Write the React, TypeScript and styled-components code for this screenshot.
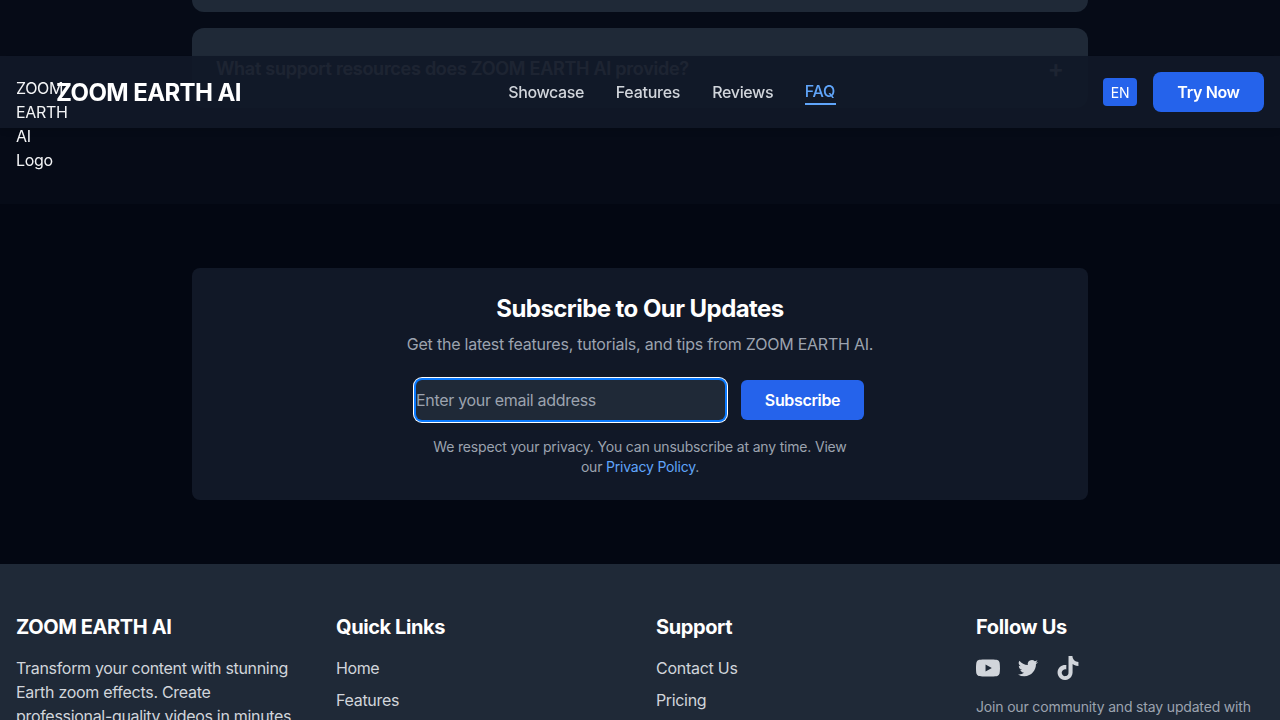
import React from "react";
import styled, { createGlobalStyle } from "styled-components";

const Global = createGlobalStyle`
  *, *::before, *::after { box-sizing: border-box; }
  body {
    margin: 0;
    height: 720px;
    overflow: hidden;
    background: #030712;
    color: #f3f4f6;
    font: 400 16px/24px Inter, "Liberation Sans", sans-serif;
  }
  h2, h3, p, ul { margin: 0; padding: 0; }
  ul { list-style: none; }
  a { color: inherit; text-decoration: none; }
  button, input { font: inherit; border: 0; padding: 0; }
`;

const T = styled.span<{ $ls?: number }>`
  letter-spacing: ${(p) => p.$ls ?? 0}px;
  white-space: nowrap;
`;

const Header = styled.header`
  position: fixed;
  top: 56px;
  left: 0;
  right: 0;
  z-index: 10;
  height: 72px;
  padding: 0 16px;
  display: flex;
  align-items: center;
  justify-content: space-between;
  background: rgba(17, 24, 39, 0.95);
  box-shadow: 0 4px 6px -1px rgba(0, 0, 0, 0.1);
`;
const Brand = styled.a`
  display: flex;
  align-items: center;
  gap: 8px;
`;
const LogoAlt = styled.span`
  width: 32px;
  height: 32px;
  letter-spacing: -0.35px;
`;
const BrandName = styled.span`
  width: 185px;
  padding-top: 2px;
  font-size: 24px;
  font-weight: 700;
  line-height: 32px;
  color: #fff;
  white-space: nowrap;
`;
const Nav = styled.nav`
  display: flex;
  align-items: center;
  gap: 32px;
`;
const NavLink = styled.a<{ $active?: boolean; $w: number }>`
  width: ${(p) => p.$w}px;
  white-space: nowrap;
  font-weight: 500;
  color: ${(p) => (p.$active ? "#60a5fa" : "#d1d5db")};
  border-bottom: ${(p) => (p.$active ? "2px solid #60a5fa" : "0")};
`;
const Actions = styled.div`
  display: flex;
  align-items: center;
  gap: 16px;
`;
const Lang = styled.button`
  width: 34px;
  height: 28px;
  padding-top: 2px;
  border-radius: 4px;
  background: #2563eb;
  color: #fff;
  font-size: 14px;
  line-height: 20px;
`;
const Primary = styled.button<{ $w: number; $r: number }>`
  flex: none;
  width: ${(p) => p.$w}px;
  height: 40px;
  border-radius: ${(p) => p.$r}px;
  background: #2563eb;
  color: #fff;
  font-weight: 600;
`;

const FaqSection = styled.section`
  height: 204px;
  overflow: hidden;
  display: flex;
  flex-direction: column;
  justify-content: flex-end;
  align-items: center;
  gap: 16px;
  padding-bottom: 96px;
  background: #060b17;
`;
const FaqItem = styled.div`
  flex: none;
  width: 896px;
  height: 80px;
  padding: 2px 24px 0;
  border-radius: 12px;
  display: flex;
  align-items: center;
  justify-content: space-between;
  background: #1f2937;
  color: #fff;
  font-size: 18px;
  font-weight: 600;
`;
const Plus = styled.span`
  font-size: 24px;
  line-height: 32px;
`;

const SubscribeSection = styled.section`
  height: 360px;
  padding: 64px 0;
  background: #030712;
`;
const Card = styled.div`
  width: 896px;
  height: 232px;
  margin: 0 auto;
  padding: 25px 24px 24px;
  border-radius: 8px;
  background: #111827;
  text-align: center;
  display: flex;
  flex-direction: column;
  align-items: center;
`;
const CardTitle = styled.h2`
  font-size: 24px;
  line-height: 32px;
  font-weight: 700;
  color: #fff;
  margin-bottom: 7px;
`;
const CardText = styled.p`
  color: #9ca3af;
  margin-bottom: 24px;
`;
const Form = styled.form`
  width: 448px;
  display: flex;
  gap: 16px;
  margin-bottom: 17px;
`;
const Email = styled.input<{ $ls: number }>`
  flex: 1;
  min-width: 0;
  height: 40px;
  border-radius: 6px;
  background: #1f2937;
  color: #fff;
  outline: none;
  letter-spacing: ${(p) => p.$ls}px;
  box-shadow: 0 0 0 2px #0a7aff, 0 0 0 3px #fff;
  &::placeholder { color: #9ca3af; opacity: 1; }
`;
const Note = styled.p`
  font-size: 14px;
  line-height: 20px;
  color: #9ca3af;
`;
const Policy = styled.a`
  color: #60a5fa;
`;

const Footer = styled.footer`
  height: 156px;
  overflow: hidden;
  padding: 49px 16px 0;
  display: grid;
  grid-template-columns: repeat(4, 1fr);
  gap: 32px;
  background: #1f2937;
  color: #d1d5db;
`;
const FooterTitle = styled.h3`
  font-size: 20px;
  line-height: 28px;
  font-weight: 700;
  color: #fff;
  margin-bottom: 15px;
`;
const Links = styled.ul`
  display: flex;
  flex-direction: column;
  gap: 8px;
`;
const Social = styled.div`
  display: flex;
  gap: 16px;
  margin-bottom: 17px;
`;
const Icon = styled.svg`
  width: 24px;
  height: 24px;
  fill: currentColor;
`;

export default function App() {
  return (
    <>
      <Global />
      <Header>
        <Brand href="#">
          <LogoAlt>ZOOM EARTH AI Logo</LogoAlt>
          <BrandName><T $ls={-0.6}>ZOOM EARTH AI</T></BrandName>
        </Brand>
        <Nav>
          <NavLink href="#" $w={75.5}><T $ls={-0.38}>Showcase</T></NavLink>
          <NavLink href="#" $w={64.5}><T $ls={-0.25}>Features</T></NavLink>
          <NavLink href="#" $w={60.5}><T $ls={-0.35}>Reviews</T></NavLink>
          <NavLink href="#" $w={31} $active><T $ls={-0.2}>FAQ</T></NavLink>
        </Nav>
        <Actions>
          <Lang><T $ls={-0.2}>EN</T></Lang>
          <Primary $w={111} $r={8}><T $ls={-0.35}>Try Now</T></Primary>
        </Actions>
      </Header>
      <main>
        <FaqSection>
          <FaqItem />
          <FaqItem>
            <T $ls={-0.26}>What support resources does ZOOM EARTH AI provide?</T>
            <Plus>+</Plus>
          </FaqItem>
        </FaqSection>
        <SubscribeSection>
          <Card>
            <CardTitle><T $ls={-0.56}>Subscribe to Our Updates</T></CardTitle>
            <CardText><T $ls={-0.23}>Get the latest features, tutorials, and tips from ZOOM EARTH AI.</T></CardText>
            <Form>
              <Email $ls={-0.31} type="email" placeholder="Enter your email address" />
              <Primary type="button" $w={123} $r={6}><T $ls={-0.35}>Subscribe</T></Primary>
            </Form>
            <Note>
              <T $ls={-0.18}>We respect your privacy. You can unsubscribe at any time. View</T>
              <br />
              <T $ls={-0.2}>our <Policy href="#">Privacy Policy</Policy>.</T>
            </Note>
          </Card>
        </SubscribeSection>
      </main>
      <Footer>
        <div>
          <FooterTitle><T $ls={-0.4}>ZOOM EARTH AI</T></FooterTitle>
          <p>
            <T $ls={-0.32}>Transform your content with stunning</T><br />
            <T $ls={-0.28}>Earth zoom effects. Create</T><br />
            <T $ls={-0.31}>professional-quality videos in minutes.</T>
          </p>
        </div>
        <div>
          <FooterTitle><T $ls={-0.4}>Quick Links</T></FooterTitle>
          <Links>
            <li><a href="#"><T $ls={-0.4}>Home</T></a></li>
            <li><a href="#"><T $ls={-0.3}>Features</T></a></li>
          </Links>
        </div>
        <div>
          <FooterTitle><T $ls={-0.4}>Support</T></FooterTitle>
          <Links>
            <li><a href="#"><T $ls={-0.27}>Contact Us</T></a></li>
            <li><a href="#"><T $ls={-0.35}>Pricing</T></a></li>
          </Links>
        </div>
        <div>
          <FooterTitle><T $ls={-0.33}>Follow Us</T></FooterTitle>
          <Social>
            <Icon viewBox="0 0 24 24"><path d="M23.498 6.186a3.016 3.016 0 0 0-2.122-2.136C19.505 3.545 12 3.545 12 3.545s-7.505 0-9.377.505A3.017 3.017 0 0 0 .502 6.186C0 8.07 0 12 0 12s0 3.93.502 5.814a3.016 3.016 0 0 0 2.122 2.136c1.871.505 9.376.505 9.376.505s7.505 0 9.377-.505a3.015 3.015 0 0 0 2.122-2.136C24 15.93 24 12 24 12s0-3.93-.502-5.814zM9.545 15.568V8.432L15.818 12l-6.273 3.568z" /></Icon>
            <Icon viewBox="0 0 24 24"><path d="M8.29 20.251c7.547 0 11.675-6.253 11.675-11.675 0-.178 0-.355-.012-.53A8.348 8.348 0 0022 5.92a8.19 8.19 0 01-2.357.646 4.118 4.118 0 001.804-2.27 8.224 8.224 0 01-2.605.996 4.107 4.107 0 00-6.993 3.743 11.65 11.65 0 01-8.457-4.287 4.106 4.106 0 001.27 5.477A4.072 4.072 0 012.8 9.713v.052a4.105 4.105 0 003.292 4.022 4.095 4.095 0 01-1.853.07 4.108 4.108 0 003.834 2.85A8.233 8.233 0 012 18.407a11.616 11.616 0 006.29 1.84" /></Icon>
            <Icon viewBox="0 0 24 24"><path d="M12.525.02c1.31-.02 2.61-.01 3.91-.02.08 1.53.63 3.09 1.75 4.17 1.12 1.11 2.7 1.62 4.24 1.79v4.03c-1.44-.05-2.89-.35-4.2-.97-.57-.26-1.1-.59-1.62-.93-.01 2.92.01 5.84-.02 8.75-.08 1.4-.54 2.79-1.35 3.94-1.31 1.92-3.58 3.17-5.91 3.21-1.43.08-2.86-.31-4.08-1.03-2.02-1.19-3.44-3.37-3.65-5.71-.02-.5-.03-1-.01-1.49.18-1.9 1.12-3.72 2.58-4.96 1.66-1.44 3.98-2.13 6.15-1.72.02 1.48-.04 2.96-.04 4.44-.99-.32-2.15-.23-3.02.37-.63.41-1.11 1.04-1.36 1.75-.21.51-.15 1.07-.14 1.61.24 1.64 1.82 3.02 3.5 2.87 1.12-.01 2.19-.66 2.77-1.61.19-.33.4-.67.41-1.06.1-1.79.06-3.57.07-5.36.01-4.03-.01-8.05.02-12.07z" /></Icon>
          </Social>
          <Note><T $ls={-0.17}>Join our community and stay updated with</T></Note>
        </div>
      </Footer>
    </>
  );
}
